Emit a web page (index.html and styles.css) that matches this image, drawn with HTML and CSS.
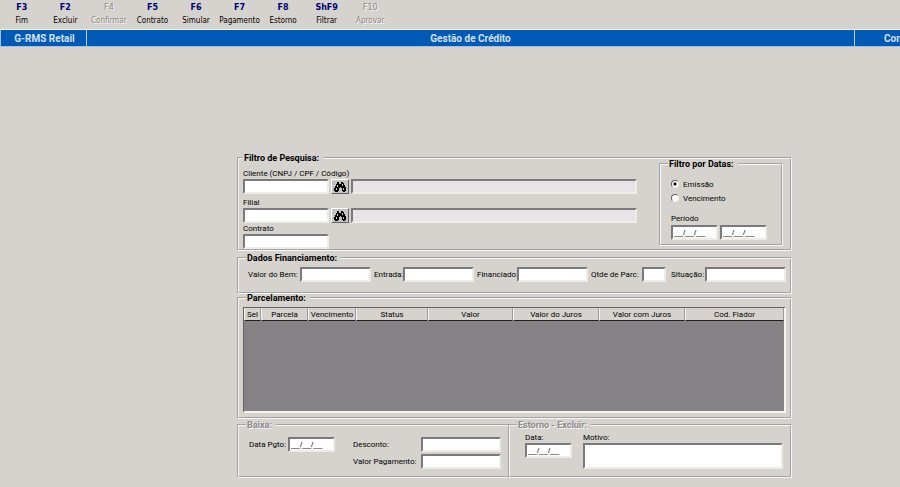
FILE: index.html
```html
<!DOCTYPE html>
<html lang="pt-BR">
<head>
    <meta charset="utf-8">
    <title>Gestão de Crédito</title>
    <link rel="stylesheet" href="styles.css">
</head>
<body>
<svg class="sprite" width="0" height="0" aria-hidden="true">
    <symbol id="binoculo" viewBox="0 0 12 10">
        <path d="M3 0h2v2h2V0h2v1h1v2h1v2h1v4h-1v1H9V9H8V6H7V5H6v1H5v3H4v1H1V9H0V6h1V4h1V2h1z"/>
        <path class="brilho" d="M3 3h1v2H3zM8 2h1v2H8zM2 6h1v2H2zM9 6h1v2H9z"/>
    </symbol>
</svg>

<div class="toolbar">
    <button type="button"><b>F3</b><span>Fim</span></button>
    <button type="button"><b>F2</b><span>Excluir</span></button>
    <button type="button" disabled><b>F4</b><span>Confirmar</span></button>
    <button type="button"><b>F5</b><span>Contrato</span></button>
    <button type="button"><b>F6</b><span>Simular</span></button>
    <button type="button"><b>F7</b><span>Pagamento</span></button>
    <button type="button"><b>F8</b><span>Estorno</span></button>
    <button type="button"><b>ShF9</b><span>Filtrar</span></button>
    <button type="button" disabled><b>F10</b><span>Aprovar</span></button>
</div>

<div class="barra">
    <div class="barra_sistema">G-RMS Retail</div>
    <div class="barra_titulo">Gestão de Crédito</div>
    <div class="barra_direita">Con</div>
</div>

<form class="tela">
    <fieldset class="filtro">
        <legend>Filtro de Pesquisa:</legend>
        <div class="filtro_linha">
            <div class="filtro_campos">
                <label for="cliente">Cliente (CNPJ / CPF / Código)</label>
                <div class="busca">
                    <input class="txt" id="cliente" type="text">
                    <button class="lupa" type="button" aria-label="Buscar cliente"><svg><use href="#binoculo"/></svg></button>
                    <input class="txt leitura" type="text" readonly aria-label="Nome do cliente">
                </div>
                <label class="espaco" for="filial">Filial</label>
                <div class="busca">
                    <input class="txt" id="filial" type="text">
                    <button class="lupa" type="button" aria-label="Buscar filial"><svg><use href="#binoculo"/></svg></button>
                    <input class="txt leitura" type="text" readonly aria-label="Nome da filial">
                </div>
                <label for="contrato">Contrato</label>
                <div class="busca">
                    <input class="txt" id="contrato" type="text">
                </div>
            </div>
            <fieldset class="datas">
                <legend>Filtro por Datas:</legend>
                <label class="opcao"><input type="radio" name="tipo" checked>Emissão</label>
                <label class="opcao"><input type="radio" name="tipo">Vencimento</label>
                <label class="periodo" for="inicio">Período</label>
                <div class="datas_linha">
                    <input class="txt data" id="inicio" type="text" value="__/__/__">
                    <input class="txt data" type="text" value="__/__/__" aria-label="Período final">
                </div>
            </fieldset>
        </div>
    </fieldset>

    <fieldset class="dados">
        <legend>Dados Financiamento:</legend>
        <div class="dados_linha">
            <label class="l_bem" for="bem">Valor do Bem:</label>
            <input class="txt valor" id="bem" type="text">
            <label class="l_entrada" for="entrada">Entrada:</label>
            <input class="txt valor" id="entrada" type="text">
            <label class="l_financiado" for="financiado">Financiado:</label>
            <input class="txt valor" id="financiado" type="text">
            <label class="l_parc" for="parc">Qtde de Parc:</label>
            <input class="txt parc" id="parc" type="text">
            <label class="l_situacao" for="situacao">Situação:</label>
            <input class="txt situacao" id="situacao" type="text">
        </div>
    </fieldset>

    <fieldset class="parcelamento">
        <legend>Parcelamento:</legend>
        <div class="grade">
            <table>
                <colgroup>
                    <col class="c_sel"><col class="c_parcela"><col class="c_venc"><col class="c_status">
                    <col class="c_valor"><col class="c_juros"><col class="c_juros"><col>
                </colgroup>
                <thead>
                <tr>
                    <th>Sel</th>
                    <th>Parcela</th>
                    <th>Vencimento</th>
                    <th>Status</th>
                    <th>Valor</th>
                    <th>Valor do Juros</th>
                    <th>Valor com Juros</th>
                    <th>Cod. Fiador</th>
                </tr>
                </thead>
                <tbody></tbody>
            </table>
        </div>
    </fieldset>

    <div class="rodape">
        <fieldset class="inativo baixa">
            <legend>Baixa:</legend>
            <div class="baixa_linha">
                <label class="l_pgto" for="pgto">Data Pgto:</label>
                <input class="txt data" id="pgto" type="text" value="__/__/__">
                <div class="baixa_valores">
                    <label for="desconto">Desconto:</label>
                    <input class="txt" id="desconto" type="text">
                    <label for="pagamento">Valor Pagamento:</label>
                    <input class="txt" id="pagamento" type="text">
                </div>
            </div>
        </fieldset>
        <fieldset class="inativo estorno">
            <legend>Estorno - Excluir:</legend>
            <div class="estorno_linha">
                <div class="estorno_data">
                    <label for="data_estorno">Data:</label>
                    <input class="txt data" id="data_estorno" type="text" value="__/__/__">
                </div>
                <div class="estorno_motivo">
                    <label for="motivo">Motivo:</label>
                    <textarea class="txt" id="motivo"></textarea>
                </div>
            </div>
        </fieldset>
    </div>
</form>
</body>
</html>
```
FILE: styles.css
```css
*{margin:0;padding:0;box-sizing:border-box;}
body{
    background: #d6d3ce;
    color: #000;
    font: 8px/11px Roboto, "Liberation Sans", Arial, sans-serif;
    overflow-x: hidden;
}
.sprite{
    display: block;
}
label{
    display: block;
    white-space: nowrap;
}

/* teclas de função */
.toolbar{
    display: grid;
    grid-template-columns: repeat(9, 1fr);
    width: 392px;
    height: 29px;
}
.toolbar button{
    display: flex;
    flex-direction: column;
    align-items: center;
    gap: 2px;
    padding-top: 2px;
    background: none;
    border: 0;
    color: #000;
    font: 8px/11px "DejaVu Sans Condensed", "DejaVu Sans", sans-serif;
}
.toolbar b{
    color: #000073;
    font-family: "DejaVu Sans", sans-serif;
}
.toolbar button:disabled,
.toolbar button:disabled b{
    color: #8c8a86;
    font-weight: normal;
    text-shadow: 1px 1px 0 #f7f7f7;
}

/* barra de título */
.barra{
    display: flex;
    height: 18px;
    background: #005ab5;
    border-top: 1px solid #f4f6f8;
    border-bottom: 1px solid #9cc3e7;
    color: #d6e0ea;
    font: bold 10px/18px Roboto, "Liberation Sans", Arial, sans-serif;
    text-align: center;
}
.barra_sistema{
    width: 86px;
    padding-left: 2px;
    border-left: 1px solid #9cc3e7;
}
.barra_titulo{
    flex: 1;
    border-left: 1px solid #b5d3ef;
    border-right: 1px solid #b5d3ef;
}
.barra_direita{
    width: 45px;
    padding-left: 29px;
    text-align: left;
    overflow: hidden;
}

/* quadros */
.tela{
    padding: 107px 108px 9px 237px;
}
fieldset{
    min-width: 0;
    border: 2px groove #f7f7f7;
}
legend{
    margin-left: 4px;
    padding: 0 4px 0 1px;
    font: bold 9px/8px Roboto, "Liberation Sans", Arial, sans-serif;
    white-space: nowrap;
}
.txt{
    display: block;
    min-width: 0;
    height: 15px;
    padding: 0 1px;
    background: #fff;
    border: 2px solid;
    border-color: #7b797b #efebe7 #efebe7 #7b797b;
    border-radius: 0;
    outline: none;
    color: #000;
    font: 8px/11px Roboto, "Liberation Sans", Arial, sans-serif;
}
.data{
    width: 47px;
    font-family: "Liberation Sans", Arial, sans-serif;
}

/* filtro */
.filtro{
    height: 97px;
}
.filtro_linha{
    display: flex;
    justify-content: space-between;
    padding: 0 7px 0 4px;
}
.filtro_campos{
    flex: 1;
    padding-top: 6px;
}
.espaco{
    margin-top: 3px;
}
.busca{
    display: flex;
    gap: 2px;
}
.busca .txt{
    width: 86px;
}
.busca .leitura{
    flex: 1;
    background: #e7e3e7;
}
.lupa{
    display: flex;
    align-items: center;
    justify-content: center;
    width: 18px;
    height: 15px;
    background: #c6c3c6;
    border: 1px solid;
    border-color: #fff #636163 #636163 #fff;
}
.lupa svg{
    width: 12px;
    height: 10px;
}
.brilho{
    fill: #c6c3c6;
}
.datas{
    width: 124px;
    height: 86px;
    margin: -2px 0 0 22px;
    padding: 0 10px;
}
.datas legend{
    margin-left: -3px;
}
.opcao{
    display: flex;
    align-items: center;
    gap: 4px;
    height: 14px;
}
.datas legend + .opcao{
    margin-top: 9px;
}
.opcao input{
    appearance: none;
    width: 8px;
    height: 8px;
    background: #fff;
    border: 1px solid;
    border-color: #636163 #efebe7 #efebe7 #636163;
    border-radius: 50%;
}
.opcao input:checked{
    background: radial-gradient(circle, #000 0 1px, #fff 2px);
}
.periodo{
    margin-top: 8px;
}
.datas_linha{
    display: flex;
    gap: 2px;
    padding-top: 1px;
}

/* financiamento */
.dados{
    height: 40px;
    margin-top: 3px;
}
.dados legend,
.parcelamento legend,
.inativo legend{
    margin-left: 7px;
}
.dados_linha{
    display: flex;
    align-items: center;
    padding: 5px 4px 0 9px;
}
.valor{
    flex: 1;
}
.l_bem{
    width: 52px;
}
.l_entrada{
    width: 32px;
    padding-left: 3px;
}
.l_financiado{
    width: 43px;
    padding-left: 3px;
}
.l_parc{
    width: 54px;
    padding-left: 3px;
}
.parc{
    width: 24px;
}
.l_situacao{
    width: 39px;
    padding-left: 5px;
}
.situacao{
    width: 81px;
}

/* parcelas */
.parcelamento{
    height: 125px;
}
.grade{
    height: 106px;
    margin: 5px 4px 0;
    background: #848284;
    border: 1px solid;
    border-width: 1px 2px 2px 1px;
    border-color: #636163 #f7f3ef #f7f3ef #636163;
}
.grade table{
    width: 100%;
    table-layout: fixed;
    border-collapse: separate;
    border-spacing: 0;
}
.grade th{
    height: 13px;
    background: #d6d3ce;
    border-left: 1px solid #f7f3ef;
    border-right: 1px solid #9c9a9c;
    border-bottom: 1px solid #212021;
    font-weight: normal;
    white-space: nowrap;
}
.c_sel{width: 17px;}
.c_parcela{width: 47px;}
.c_venc{width: 48px;}
.c_status{width: 72px;}
.c_valor{width: 85px;}
.c_juros{width: 86px;}

/* baixa e estorno */
.rodape{
    display: flex;
    margin-top: 2px;
}
.inativo{
    height: 57px;
}
.inativo legend{
    color: #8c8a8c;
    text-shadow: 1px 1px 0 #f7f7f7;
}
.baixa{
    width: 273px;
}
.estorno{
    flex: 1;
    margin-left: -2px;
}
.baixa_linha{
    display: flex;
    padding: 8px 7px 0 10px;
}
.baixa_linha label{
    line-height: 15px;
}
.l_pgto{
    width: 39px;
}
.baixa_valores{
    display: grid;
    flex: 1;
    grid-template-columns: 68px 1fr;
    gap: 2px 0;
    margin-left: 18px;
}
.estorno_linha{
    display: flex;
    gap: 11px;
    padding: 3px 7px 0 15px;
}
.estorno_motivo{
    flex: 1;
}
.estorno_motivo textarea{
    width: 100%;
    height: 26px;
    resize: none;
}
```
